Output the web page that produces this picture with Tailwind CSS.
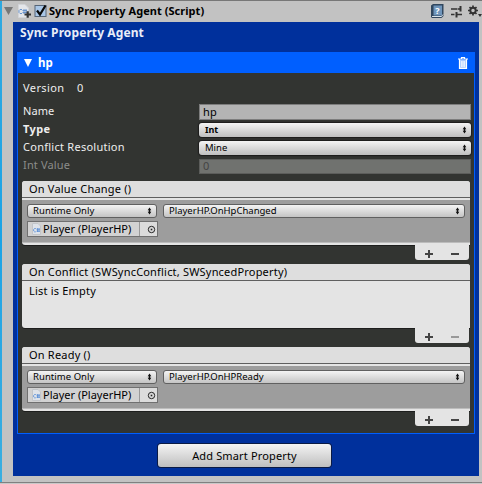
<!DOCTYPE html>
<html lang="en">
<head>
<meta charset="utf-8">
<title>Sync Property Agent</title>
<script src="https://cdn.jsdelivr.net/npm/@tailwindcss/browser@4"></script>
</head>
<body class="w-[482px] h-[484px] overflow-hidden bg-[#c2c2c2] text-[11px] leading-[16px] text-black whitespace-nowrap font-['Noto_Sans','Open_Sans',sans-serif]">
<svg class="hidden">
  <symbol id="arrows" viewBox="0 0 5 8"><path d="M2.5 0.5 4.3 3.2H3.200V4.800H4.300L2.500 7.500.7 4.800H1.800V3.200H.7z" fill="#111"/></symbol>
  <symbol id="script" viewBox="0 0 9 12"><path d="M.5.5H6L8.5 3V11.500H.5z" fill="#dfe3e9" stroke="#c3c6ca"/><path d="M3.800 5.500H2.500L1.700 6.300V8L2.500 8.800H3.800M4.500 6.200H8M4.500 8.200H8M5.500 5.200V9M7 5.200V9" stroke="#5f92d6" stroke-width=".9" fill="none"/></symbol>
  <symbol id="picker" viewBox="0 0 9 9"><circle cx="4.500" cy="4.500" r="3.200" fill="none" stroke="#222"/><rect x="3.700" y="3.700" width="1.600" height="1.600" fill="#222"/></symbol>
</svg>
<div class="flex h-[482px] border-t border-[#777] border-b-0">
  <div class="w-[2px] shrink-0 bg-gradient-to-b from-[#2fa9e0] via-[#1aa3e6] to-[#3aaee0]"></div>
  <div class="flex-1 pl-[11px] pr-[3px]">
    <header class="h-[21px] -ml-[11px] -mr-[3px] flex items-center pl-[2px]">
      <svg class="w-[9px] h-[8px] -mt-px" viewBox="0 0 9 8"><path d="M0 0H9L4.500 8z" fill="#777"/></svg>
      <svg class="w-[14px] h-[16px] ml-[4px] -mt-px" viewBox="0 0 14 16"><path d="M1.500 1.500H8L11.500 5V14.500H1.500z" fill="#e4e6ea" stroke="#d3d5d9"/><path d="M5 6.500H3L2 7.500V9.500L3 10.500H5M5.500 7.500H10M5.500 9.500H10M7 6V11M9 6V10" stroke="#6a94cc" fill="none"/><path d="M7.500 11.500H14M10.700 8.300V14.800" stroke="#333" stroke-width="2.200"/></svg>
      <svg class="w-[14px] h-[14px] ml-[3px] -mt-px" viewBox="0 0 14 14"><rect x="1" y="1.500" width="11" height="11" fill="#a9c6e6" stroke="#566577"/><path d="M3 6.500 6 10.500 11.500 1.500" fill="none" stroke="#080808" stroke-width="2.200"/></svg>
      <span class="ml-[1px] -mt-[2px] font-bold tracking-[0.050px]">Sync Property Agent (Script)</span>
      <svg class="w-[13px] h-[14px] ml-auto -mt-[2px]" viewBox="0 0 13 14"><path d="M0 1.500 2 0H12.500V12L10.500 14H1L0 13z" fill="#31475f"/><path d="M2.500 1.500H11V11.500H2.500z" fill="#6f95bb"/><path d="M1 12.500H10.500L12 10.500" stroke="#d9e2ea" fill="none"/><text x="4.300" y="10" font-size="9" font-weight="700" fill="#fff">?</text></svg>
      <svg class="w-[11px] h-[13px] ml-[7px] -mt-px" viewBox="0 0 11 13"><path d="M0 4H6M6.500 4H9M0 9.500H3.500M6 9.500H11" stroke="#333" stroke-width="1.500"/><path d="M9.500 1V6.500M5.500 7V12.500" stroke="#333" stroke-width="2"/></svg>
      <svg class="w-[14px] h-[12px] ml-[6px] -mt-[2px]" viewBox="0 0 14 12"><g stroke="#333" fill="none"><circle cx="5" cy="5.500" r="2.700" stroke-width="1.900"/><path d="M5 .5V2.500M5 8.500V10.500M0 5.500H2M8 5.500H10M1.500 2 3 3.500M7 7.500 8.500 9M8.500 2 7 3.500M1.500 9 3 7.500" stroke-width="1.700"/></g><path d="M10 9H14L12 12z" fill="#333"/></svg>
    </header>

    <main class="h-[454px] bg-[#00309c] px-[4px]">
      <h1 class="h-[30px] pt-[3px] pl-[3px] text-[12px] font-bold text-[#e9edf8] tracking-[0.100px]">Sync Property Agent</h1>
      <section class="h-[382px] border border-t-0 border-[#005fff] bg-[#323431]">
        <div class="h-[21px] -mx-px bg-[#005fff] flex items-center pl-[7px] pr-[7px] text-white">
          <svg class="w-[8px] h-[8px]" viewBox="0 0 8 8"><path d="M0 0H8L4 8z" fill="#fff"/></svg>
          <span class="ml-[6px] font-bold text-[11.500px]">hp</span>
          <svg class="w-[10px] h-[12px] ml-auto" viewBox="0 0 10 12"><path d="M2 3H8V11H2z" fill="#a9c9ff"/><path d="M0 2H10M3.500 1.500V.5H6.500V1.500M1.500 2V11.300H8.500V2M3.900 4V10M6.100 4V10" fill="none" stroke="#fff" stroke-width="1.200"/></svg>
        </div>
        <div class="h-[108px] px-[5px] pt-[7px] text-[#eee] pr-[3px]">
          <div class="h-[23px] flex"><span class="w-[54px] tracking-[0.400px]">Version</span><span>0</span></div>
          <div class="h-[18px] flex items-center"><span class="w-[176px] pb-[2px] tracking-[0.050px]">Name</span><span class="flex-1 h-[16px] bg-[#b4b4b4] border border-[#7d7d7d] text-black pl-[3px] leading-[13px] tracking-[0.200px]">hp</span></div>
          <div class="h-[18px] flex items-center"><span class="w-[176px] pb-[2px] font-bold tracking-[0.400px]">Type</span><span class="flex-1 h-[14px] rounded-[3px] bg-gradient-to-b from-[#f4f4f4] to-[#bfbfbf] text-black pl-[6px] pr-[4px] flex items-center text-[9px] font-bold shadow-[0_0_1px_1px_#1c1c1c]"><span class="pb-px">Int</span><svg class="ml-auto w-[5px] h-[8px]"><use href="#arrows"/></svg></span></div>
          <div class="h-[18px] flex items-center"><span class="w-[176px] pb-[2px] tracking-[0.260px]">Conflict Resolution</span><span class="flex-1 h-[14px] rounded-[3px] bg-gradient-to-b from-[#f4f4f4] to-[#bfbfbf] text-black pl-[6px] pr-[4px] flex items-center text-[9.500px] shadow-[0_0_1px_1px_#1c1c1c]"><span class="pb-px">Mine</span><svg class="ml-auto w-[5px] h-[8px]"><use href="#arrows"/></svg></span></div>
          <div class="h-[18px] flex items-center text-[#8b8c8a]"><span class="w-[176px] pb-[2px] tracking-[0.150px]">Int Value</span><span class="flex-1 h-[15px] bg-[#70726f] border border-[#5c5d5b] text-[#444] pl-[3px] leading-[12px]">0</span></div>
        </div>

        <div class="pl-[4px] pr-[4px] flex flex-col gap-[4px]">
          <div class="h-[79px]">
            <div class="h-[64px] bg-[#e4e4e4] rounded-[3px] rounded-br-none shadow-[0_1px_0_#1d1e1d]">
              <div class="h-[17px] bg-[#dedede] rounded-t-[3px] border-b border-[#5f5f5f] pl-[7px] tracking-[0.200px]">On Value Change ()</div>
              <div class="h-[43px] mt-[2px] bg-[#9d9d9d] border-b border-[#bcbcbc] pt-[4px] pl-[5px] pr-[5px]">
                <div class="flex gap-[6px]">
                  <span class="w-[130px] h-[14px] rounded-[3px] border border-[#606060] bg-gradient-to-b from-[#f4f4f4] to-[#c4c4c4] pl-[5px] pr-[4px] flex items-center text-[9.500px]"><span class="tracking-[0.050px]">Runtime Only</span><svg class="ml-auto w-[5px] h-[8px]"><use href="#arrows"/></svg></span>
                  <span class="flex-1 h-[14px] rounded-[3px] border border-[#606060] bg-gradient-to-b from-[#f4f4f4] to-[#c4c4c4] pl-[5px] pr-[4px] flex items-center text-[9.500px]"><span>PlayerHP.OnHpChanged</span><svg class="ml-auto w-[5px] h-[8px]"><use href="#arrows"/></svg></span>
                </div>
                <div class="mt-[3px] w-[131px] h-[16px] border border-[#707070] bg-[#d2d2d2] flex items-center pl-[4px]"><svg class="w-[9px] h-[12px]"><use href="#script"/></svg><span class="ml-[2px] tracking-[0px]">Player (PlayerHP)</span><span class="ml-auto w-[18px] h-[14px] bg-[#dcdcdc] border-l border-[#999] flex items-center justify-end pr-[1px]"><svg class="w-[9px] h-[9px]"><use href="#picker"/></svg></span></div>
              </div>
            </div>
            <div class="w-[54px] h-[15px] ml-auto mr-[1px] relative bg-[#e4e4e4] rounded-b-[3px] flex items-center justify-between px-[10px] pt-[2px]"><svg class="w-[8px] h-[8px]" viewBox="0 0 8 8"><path d="M0 4H8M4 0V8" stroke="#444" stroke-width="2"/></svg><svg class="w-[8px] h-[8px]" viewBox="0 0 8 8"><path d="M0 4H8" stroke="#444" stroke-width="2"/></svg></div>
          </div>

          <div class="h-[79px]">
            <div class="h-[64px] bg-[#e4e4e4] rounded-[3px] rounded-br-none shadow-[0_1px_0_#1d1e1d]">
              <div class="h-[17px] bg-[#dedede] rounded-t-[3px] border-b border-[#5f5f5f] pl-[7px] tracking-[0.190px]">On Conflict (SWSyncConflict, SWSyncedProperty)</div>
              <div class="pt-[2px] pl-[7px] tracking-[0.200px]">List is Empty</div>
            </div>
            <div class="w-[54px] h-[15px] ml-auto mr-[1px] relative bg-[#e4e4e4] rounded-b-[3px] flex items-center justify-between px-[10px] pt-[2px]"><svg class="w-[8px] h-[8px]" viewBox="0 0 8 8"><path d="M0 4H8M4 0V8" stroke="#444" stroke-width="2"/></svg><svg class="w-[8px] h-[8px]" viewBox="0 0 8 8"><path d="M0 4H8" stroke="#999" stroke-width="2"/></svg></div>
          </div>

          <div class="h-[79px]">
            <div class="h-[64px] bg-[#e4e4e4] rounded-[3px] rounded-br-none shadow-[0_1px_0_#1d1e1d]">
              <div class="h-[17px] bg-[#dedede] rounded-t-[3px] border-b border-[#5f5f5f] pl-[7px] tracking-[0.200px]">On Ready ()</div>
              <div class="h-[43px] mt-[2px] bg-[#9d9d9d] border-b border-[#bcbcbc] pt-[4px] pl-[5px] pr-[5px]">
                <div class="flex gap-[6px]">
                  <span class="w-[130px] h-[14px] rounded-[3px] border border-[#606060] bg-gradient-to-b from-[#f4f4f4] to-[#c4c4c4] pl-[5px] pr-[4px] flex items-center text-[9.500px]"><span class="tracking-[0.050px]">Runtime Only</span><svg class="ml-auto w-[5px] h-[8px]"><use href="#arrows"/></svg></span>
                  <span class="flex-1 h-[14px] rounded-[3px] border border-[#606060] bg-gradient-to-b from-[#f4f4f4] to-[#c4c4c4] pl-[5px] pr-[4px] flex items-center text-[9.500px]"><span>PlayerHP.OnHPReady</span><svg class="ml-auto w-[5px] h-[8px]"><use href="#arrows"/></svg></span>
                </div>
                <div class="mt-[3px] w-[131px] h-[16px] border border-[#707070] bg-[#d2d2d2] flex items-center pl-[4px]"><svg class="w-[9px] h-[12px]"><use href="#script"/></svg><span class="ml-[2px] tracking-[0px]">Player (PlayerHP)</span><span class="ml-auto w-[18px] h-[14px] bg-[#dcdcdc] border-l border-[#999] flex items-center justify-end pr-[1px]"><svg class="w-[9px] h-[9px]"><use href="#picker"/></svg></span></div>
              </div>
            </div>
            <div class="w-[54px] h-[15px] ml-auto mr-[1px] relative bg-[#e4e4e4] rounded-b-[3px] flex items-center justify-between px-[10px] pt-[2px]"><svg class="w-[8px] h-[8px]" viewBox="0 0 8 8"><path d="M0 4H8M4 0V8" stroke="#444" stroke-width="2"/></svg><svg class="w-[8px] h-[8px]" viewBox="0 0 8 8"><path d="M0 4H8" stroke="#444" stroke-width="2"/></svg></div>
          </div>
        </div>
      </section>
      <div class="flex pt-[10px] pl-[141px]"><button class="w-[173px] h-[23px] rounded-[3px] bg-gradient-to-b from-[#f4f4f4] to-[#bfbfbf] shadow-[0_0_0_1px_#0a1a44] text-[11px] leading-[23px] tracking-[0.150px]">Add Smart Property</button></div>
    </main>
  </div>
</div>
<div class="h-[2px] border-t border-[#808080] bg-[#c8c8c8]"></div>
</body>
</html>
